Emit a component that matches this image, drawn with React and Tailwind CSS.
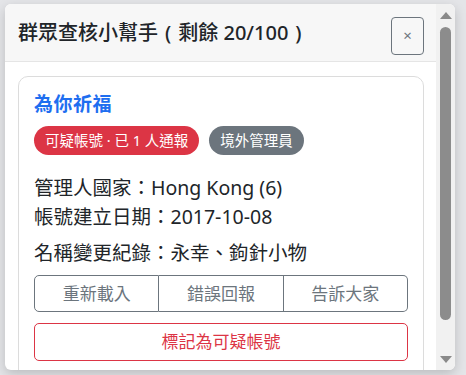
import React from "react";

const font = { fontFamily: '"Noto Sans", "Noto Sans CJK TC", sans-serif' };

export default function App() {
  return (
    <div className="w-[466px] h-[375px] bg-[#e4e5e8] relative overflow-hidden" style={font}>
      <div className="absolute left-[5px] top-[4px] w-[450px] h-[366px] rounded-[6px] overflow-hidden bg-white flex shadow-[0_4px_12px_rgba(0,0,0,0.18)]">
        <div className="flex-1 flex flex-col min-w-0">
          <div className="h-[58px] shrink-0 bg-[#f7f7f7] border-b border-[#e5e5e5] flex items-center justify-between pl-[13px] pr-[12px]">
            <div className="text-[20px] font-medium text-[#212529] leading-none flex items-center">
              <span>群眾查核小幫手</span>
              <span className="ml-[7px] mr-[7px]">(</span>
              <span>剩餘 20/100</span>
              <span className="ml-[7px]">)</span>
            </div>
            <button className="w-[33px] h-[38px] mt-[6px] border border-[#6c757d] rounded-[4px] flex items-center justify-center text-[#6c757d] text-[15px] leading-none">×</button>
          </div>
          <div className="flex-1 pt-[14px] pl-[13px] pr-[12px] overflow-hidden">
            <div className="border border-[#dcdcdc] rounded-[10px] px-[15px] pt-[14px] pb-4 h-[320px]">
              <div className="text-[19px] font-bold text-[#1e6ef0] leading-[26px] tracking-[0.5px]">為你祈福</div>
              <div className="flex gap-[10px] mt-[9px]">
                <span className="h-[29px] px-[11px] rounded-full bg-[#dc3545] text-white text-[14.5px] flex items-center leading-none">可疑帳號 · 已 1 人通報</span>
                <span className="h-[29px] px-[11px] rounded-full bg-[#6c757d] text-white text-[14.5px] flex items-center leading-none">境外管理員</span>
              </div>
              <div className="mt-[18px] text-[19.5px] text-[#212529] leading-[29px]">管理人國家：Hong Kong (6)</div>
              <div className="text-[19.5px] text-[#212529] leading-[29px]">帳號建立日期：2017-10-08</div>
              <div className="mt-[7px] text-[19.5px] text-[#212529] leading-[29px]">名稱變更紀錄：永幸、鉤針小物</div>
              <div className="mt-[8px] flex h-[37px]">
                <button className="flex-1 border border-[#6c757d] rounded-l-[5px] text-[#6c757d] text-[17px]">重新載入</button>
                <button className="flex-1 border border-l-0 border-[#6c757d] text-[#6c757d] text-[17px]">錯誤回報</button>
                <button className="flex-1 border border-l-0 border-[#6c757d] rounded-r-[5px] text-[#6c757d] text-[17px]">告訴大家</button>
              </div>
              <button className="mt-[11px] w-full h-[38px] border border-[#dc3545] rounded-[5px] text-[#dc3545] text-[17px]">標記為可疑帳號</button>
            </div>
          </div>
        </div>
        <div className="w-[19px] shrink-0 bg-[#f1f1f1] flex flex-col items-center">
          <svg width="12" height="8" viewBox="0 0 12 8" className="mt-[8px]"><path d="M6 0 L12 7 L0 7 Z" fill="#8a8a8a" /></svg>
          <div className="w-[11px] h-[293px] mt-[7px] rounded-full bg-[#8c8c8c]" />
          <div className="flex-1" />
          <svg width="12" height="8" viewBox="0 0 12 8" className="mb-[7px]"><path d="M0 1 L12 1 L6 8 Z" fill="#8a8a8a" /></svg>
        </div>
      </div>
    </div>
  );
}
